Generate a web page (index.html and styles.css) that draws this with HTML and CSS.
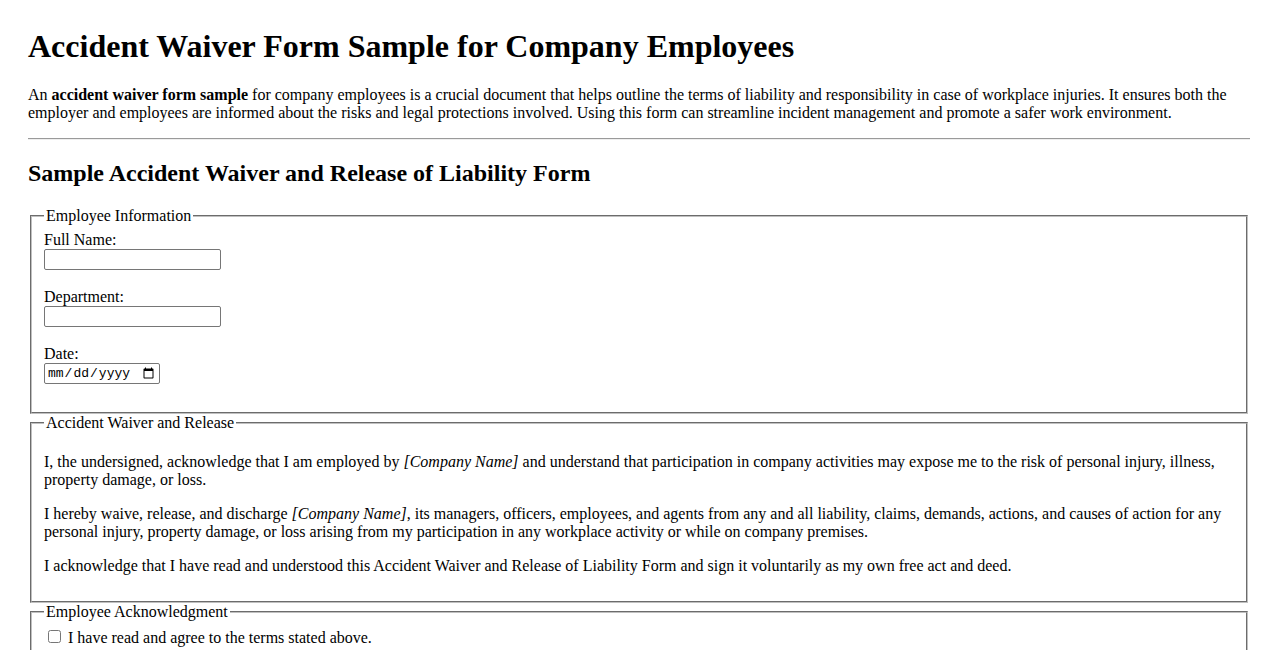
FILE: index.html
```html
<!DOCTYPE html>
<html lang="en">
<head>
<meta charset="utf-8">
<title>Accident Waiver Form Sample for Company Employees</title>
<link rel="stylesheet" href="styles.css">
</head>
<body>
<h1 class="title">Accident Waiver Form Sample for Company Employees</h1>
<p class="intro">An <strong>accident waiver form sample</strong> for company employees is a crucial document that helps outline the terms of liability and responsibility in case of workplace injuries. It ensures both the employer and employees are informed about the risks and legal protections involved. Using this form can streamline incident management and promote a safer work environment.</p>
<hr class="rule">
<h2 class="subtitle">Sample Accident Waiver and Release of Liability Form</h2>
<form class="form">
<fieldset class="group">
<legend class="legend">Employee Information</legend>
<label for="name">Full Name:</label><br>
<input class="text-input" type="text" id="name"><br><br>
<label for="dept">Department:</label><br>
<input class="text-input" type="text" id="dept"><br><br>
<label for="date">Date:</label><br>
<input class="date-input" type="date" id="date"><br><br>
</fieldset>
<fieldset class="group">
<legend class="legend">Accident Waiver and Release</legend>
<p class="para">I, the undersigned, acknowledge that I am employed by <em>[Company Name]</em> and understand that participation in company activities may expose me to the risk of personal injury, illness, property damage, or loss.</p>
<p class="para">I hereby waive, release, and discharge <em>[Company Name]</em>, its managers, officers, employees, and agents from any and all liability, claims, demands, actions, and causes of action for any personal injury, property damage, or loss arising from my participation in any workplace activity or while on company premises.</p>
<p class="para">I acknowledge that I have read and understood this Accident Waiver and Release of Liability Form and sign it voluntarily as my own free act and deed.</p>
</fieldset>
<fieldset class="group">
<legend class="legend">Employee Acknowledgment</legend>
<label class="check-label"><input class="checkbox" type="checkbox"> I have read and agree to the terms stated above.</label><br><br>
<label for="sig">Employee Signature:</label><br>
<input class="text-input" type="text" id="sig"><br><br>
</fieldset>
</form>
</body>
</html>
```

FILE: styles.css
```css
html, body {
  background: #ffffff;
}
body {
  margin: 0;
  padding: 28px 28px 28px 28px;
  font-family: "Liberation Serif", "Times New Roman", serif;
  font-size: 16px;
  line-height: 18px;
  color: #000000;
}
.title {
  font-size: 32px;
  font-weight: bold;
  line-height: normal;
  margin: 0 0 21.44px 0;
}
.intro {
  margin: 16px 0;
}
.rule {
  margin: 8px 0;
  border: 0;
  border-top: 1px solid #9a9a9a;
  border-bottom: 1px solid #eeeeee;
  height: 0;
}
.subtitle {
  font-size: 24px;
  font-weight: bold;
  line-height: normal;
  margin: 19.92px 0;
}
.form {
  margin: 0;
}
.group {
  margin: 0 2px;
  padding: 5.6px 12px 10px 12px;
  border: 2px groove #c0c0c0;
  min-inline-size: min-content;
}
.legend {
  padding: 0 2px;
}
.para {
  margin: 16px 0;
}
.text-input {
  box-sizing: border-box;
  width: 177px;
  height: 21px;
  margin: 0;
  padding: 1px 2px;
  border: 1px solid #767676;
  border-radius: 2px;
  font-family: "Liberation Sans", Arial, sans-serif;
  font-size: 13.33px;
  vertical-align: baseline;
}
.date-input {
  box-sizing: border-box;
  width: 116px;
  height: 21px;
  margin: 0;
  padding: 1px 2px;
  border: 1px solid #767676;
  border-radius: 2px;
  font-family: "Liberation Mono", "Courier New", monospace;
  font-size: 13px;
}
.checkbox {
  width: 13px;
  height: 13px;
  margin: 3px 3px 3px 4px;
  vertical-align: baseline;
}
```
